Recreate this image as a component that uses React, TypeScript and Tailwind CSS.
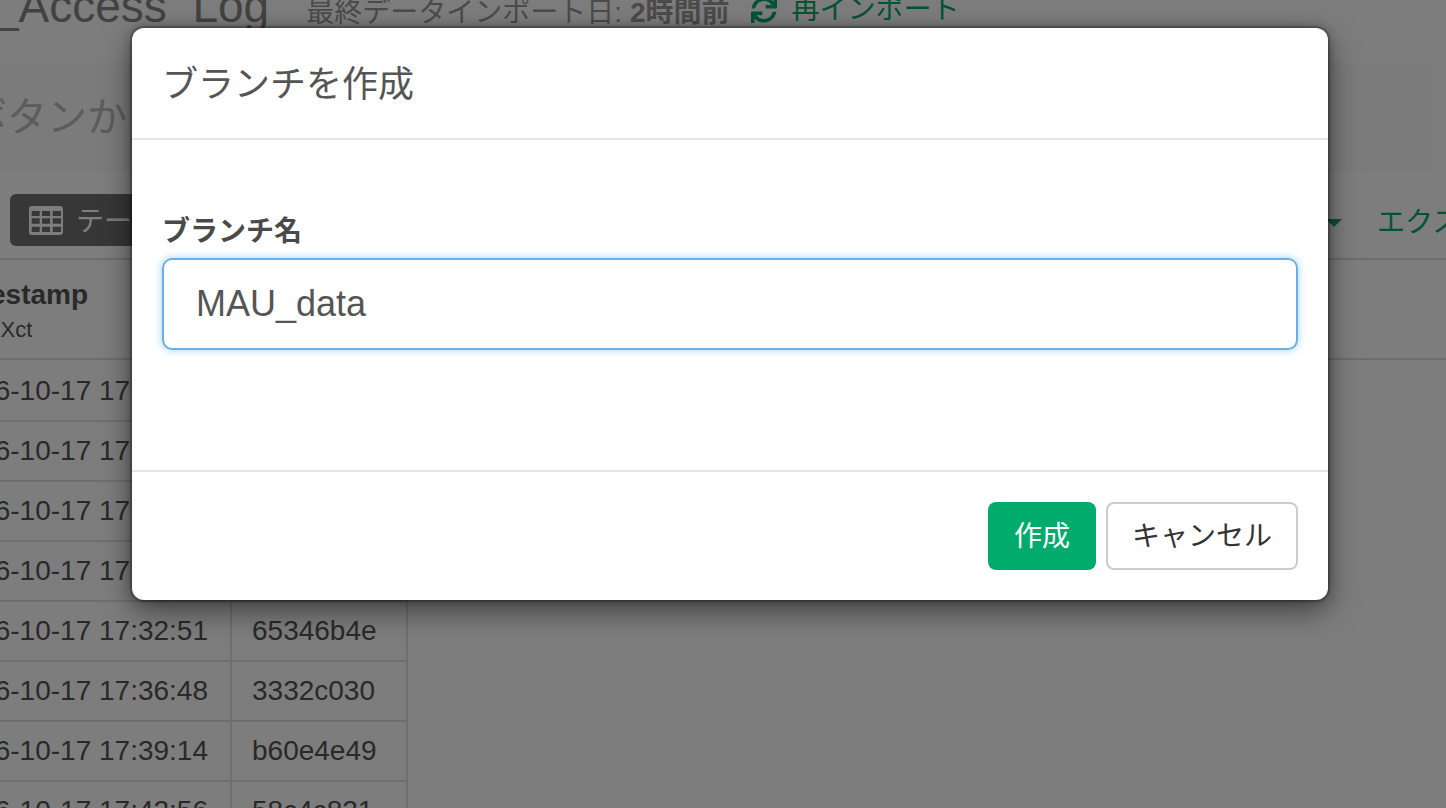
import { FaSync } from 'react-icons/fa';

const rows = [
  { time: '2016-10-17 17:20:12', id: 'a41f7c02' },
  { time: '2016-10-17 17:24:37', id: '7d09e1b3' },
  { time: '2016-10-17 17:27:05', id: 'c83a51fe' },
  { time: '2016-10-17 17:30:19', id: '19be64d7' },
  { time: '2016-10-17 17:32:51', id: '65346b4e' },
  { time: '2016-10-17 17:36:48', id: '3332c030' },
  { time: '2016-10-17 17:39:14', id: 'b60e4e49' },
  { time: '2016-10-17 17:42:56', id: '58c4c821' },
];

function TableIcon() {
  return (
    <svg width="34" height="29" viewBox="0 0 34 29" className="shrink-0">
      <path
        fill="#fff"
        fillRule="evenodd"
        d="M3 0h28a3 3 0 0 1 3 3v23a3 3 0 0 1-3 3H3a3 3 0 0 1-3-3V3a3 3 0 0 1 3-3zM2.7 5v5h8V5zM13 5v5h8V5zM23.7 5v5H32V5zM2.7 12.3v5.4h8v-5.4zM13 12.3v5.4h8v-5.4zM23.7 12.3v5.4H32v-5.4zM2.7 20.7V26h8v-5.3zM13 20.7V26h8v-5.3zM23.7 20.7V26H32v-5.3z"
      />
    </svg>
  );
}

function Page() {
  return (
    <div className="h-[808px] overflow-hidden bg-white">
      {/* page title, scrolled partly out of view */}
      <div className="h-[62px] overflow-hidden">
        <div className="-mt-[27px] -ml-[7px] flex items-baseline whitespace-nowrap">
          <span className="text-[46px] leading-[66px] text-[#888]">_Access_Log</span>
          <span className="ml-[37px] text-[28px] text-[#999]">最終データインポート日: </span>
          <span className="ml-[8px] text-[28px] font-bold text-[#999]">2時間前</span>
          <span className="ml-[21px] flex items-center gap-[15px] self-center pt-[8px] text-[28px] text-[#00ab6c]">
            <FaSync className="h-[26px] w-[26px]" />
            再インポート
          </span>
        </div>
      </div>

      <div className="mr-[14px] flex h-[110px] items-center overflow-hidden whitespace-nowrap bg-[#fbfbfb] text-[40px] text-[#bbb]">
        <span className="-ml-[33px]">ボタンから</span>
      </div>

      <div className="flex h-[88px] items-start justify-between border-b-2 border-[#dedede] pt-[22px] pl-[10px]">
        <div className="flex h-[52px] w-[240px] items-center gap-[13px] rounded-[6px] bg-[#707070] pl-[19px] text-[28px] text-white">
          <TableIcon />
          <span className="pt-[3px]">テーブル</span>
        </div>
        <div className="flex h-[52px] w-[120px] items-center overflow-hidden whitespace-nowrap pt-[6px] text-[28px] text-[#00ab6c]">
          <span className="mr-[35px] h-0 w-0 shrink-0 border-x-[8px] border-t-[8px] border-x-transparent border-t-[#00ab6c]" />
          エクスポート
        </div>
      </div>

      <div className="h-[100px] border-b-2 border-[#dedede] pt-[19px]">
        <div className="-ml-[52px] text-[28px] leading-[32px] font-bold text-[#555]">timestamp</div>
        <div className="-ml-[52px] mt-[3px] text-[22px] leading-[32px] text-[#555]">POSIXct</div>
      </div>

      <div className="-ml-[76px] w-[484px] pt-[2px]">
        {rows.map((row) => (
          <div key={row.time} className="flex h-[60px] border-b-2 border-[#e2e2e2] text-[28px] text-[#555]">
            <div className="flex w-[308px] items-center border-r-2 border-[#e2e2e2] pl-[24px]">{row.time}</div>
            <div className="flex w-[176px] items-center border-r-2 border-[#e2e2e2] pl-[20px]">{row.id}</div>
          </div>
        ))}
      </div>
    </div>
  );
}

function BranchModal() {
  return (
    <div className="absolute inset-0 overflow-hidden bg-black/[0.51] pt-[28px] pl-[132px]">
      <div className="h-[572px] w-[1196px] rounded-[12px] bg-white shadow-[0_10px_30px_rgba(0,0,0,0.5),0_0_10px_rgba(0,0,0,0.3),0_0_0_2px_rgba(0,0,0,0.2)]">
        <div className="flex h-[112px] items-center border-b-2 border-[#e5e5e5] px-[30px] pt-[4px]">
          <h4 className="text-[36px] leading-none text-[#555]">ブランチを作成</h4>
        </div>
        <div className="h-[332px] border-b-2 border-[#e5e5e5] px-[30px] pt-[72px]">
          <label className="block pt-[1px] text-[28px] leading-[37px] font-bold text-[#4a4a4a]">ブランチ名</label>
          <input
            readOnly
            value="MAU_data"
            className="mt-[8px] h-[92px] w-full rounded-[10px] border-2 border-[#66afe9] px-[32px] text-[36px] text-[#555] shadow-[0_0_8px_rgba(102,175,233,0.6)] outline-none"
          />
        </div>
        <div className="flex justify-end gap-[10px] px-[30px] pt-[30px]">
          <button className="h-[68px] w-[108px] rounded-[8px] bg-[#00ab6c] pt-[2px] text-[28px] text-white">作成</button>
          <button className="h-[68px] w-[192px] rounded-[8px] border-2 border-[#ccc] bg-white pt-[2px] text-[28px] text-[#333]">キャンセル</button>
        </div>
      </div>
    </div>
  );
}

export default function App() {
  return (
    <div className="relative h-[808px] overflow-hidden font-['Liberation_Sans','Noto_Sans_CJK_JP',sans-serif]">
      <Page />
      <BranchModal />
    </div>
  );
}
